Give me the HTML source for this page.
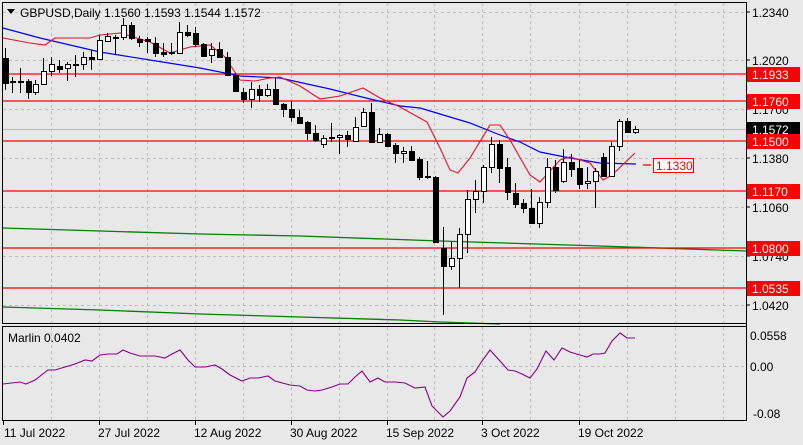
<!DOCTYPE html>
<html><head><meta charset="utf-8"><style>
html,body{margin:0;padding:0;background:#e8e8e8;}
body{width:803px;height:445px;overflow:hidden;position:relative;font-family:"Liberation Sans",sans-serif;}
svg{position:absolute;left:0;top:0;}
svg text{font-family:"Liberation Sans",sans-serif;font-size:12px;}
</style></head><body>
<svg id="s" width="803" height="445" xmlns="http://www.w3.org/2000/svg">
<rect x="0" y="0" width="803" height="445" fill="#e8e8e8"/>
<g id="grid" stroke="#bdbdbd" stroke-dasharray="3,3" stroke-width="1"></g>
<line x1="3" y1="129.5" x2="746" y2="129.5" stroke="#b8b8b8"/>
<!-- green lines -->
<polyline points="3,228 100,231 200,234 300,236 440,241 600,246 746,251" fill="none" stroke="#008000" stroke-width="1.3"/>
<polyline points="3,307 100,310 200,314 300,317 400,320 440,322 500,324" fill="none" stroke="#008000" stroke-width="1.3"/>
<!-- red horizontal levels -->
<g stroke="#ff0000" stroke-width="1.3">
<line x1="3" y1="74" x2="746" y2="74"/>
<line x1="3" y1="101" x2="746" y2="101"/>
<line x1="3" y1="141" x2="746" y2="141"/>
<line x1="3" y1="191" x2="746" y2="191"/>
<line x1="3" y1="248" x2="746" y2="248"/>
<line x1="3" y1="288" x2="746" y2="288"/>
<line x1="643" y1="165" x2="651" y2="165"/>
</g>
<!-- blue MA -->
<polyline points="3,28 40,38 100,52 150,60 200,68 240,76 280,78 330,89 370,99 400,106 420,108 450,117 470,123 500,135 520,142 540,152 570,158 600,163 636,164" fill="none" stroke="#0000ff" stroke-width="1.2"/>
<!-- red MA -->
<polyline points="3,38 30,43 45,45 55,38 90,38 100,35 120,33 130,36 150,42 170,53 190,47 210,45 225,57 240,80 255,81 270,78 280,77 300,86 320,99 340,96 363,88 380,98 400,107 427,122 440,148 450,170 458,173 470,158 490,125 500,125 510,140 530,175 540,182 560,160 570,157 590,163 603,180 612,175 635,153" fill="none" stroke="#e8102a" stroke-width="1.1"/>
<g id="candles"></g>
<!-- frames -->
<rect x="2.5" y="2.5" width="744" height="321" fill="none" stroke="#000"/>
<rect x="2.5" y="326.5" width="744" height="94" fill="none" stroke="#000"/>
<line x1="746.5" y1="2" x2="746.5" y2="421" stroke="#000"/>
<!-- indicator -->
<polyline points="3,384 20,382 26,384 35,380 48,370 55,370 65,367 75,364 85,360 92,361 100,355 108,354 117,354 123,350 130,353 140,356 150,356 155,356 165,358 172,354 180,350 188,360 195,367 205,367 215,365 222,369 230,375 242,381 250,378 258,378 268,376 275,381 290,385 300,386 307,390 315,391 322,390 332,387 340,384 348,384 355,377 362,371 370,382 378,378 385,382 395,382 405,383 415,388 425,387 432,406 443,417 450,411 460,397 467,378 475,372 482,361 490,350 500,361 508,370 515,371 522,374 530,378 537,369 546,351 554,360 562,348 570,352 580,355 587,357 593,354 600,354 605,353 612,341 620,333 627,338 635,338" fill="none" stroke="#8b008b" stroke-width="1.1"/>
<text x="8" y="342" font-size="12">Marlin 0.0402</text>
<!-- title -->
<path d="M7,9 L15,9 L11,14 Z" fill="#000"/>
<text x="20" y="17">GBPUSD,Daily  1.1560 1.1593 1.1544 1.1572</text>
<!-- right axis -->
<g font-size="12" fill="#000">
<text x="752" y="17">1.2340</text>
<text x="752" y="65">1.2020</text>
<text x="752" y="114">1.1700</text>
<text x="752" y="163">1.1380</text>
<text x="752" y="212">1.1060</text>
<text x="752" y="261">1.0740</text>
<text x="752" y="310">1.0420</text>
<text x="750" y="340">0.0558</text>
<text x="750" y="371">0.00</text>
<text x="753" y="418">-0.08</text>
</g>
<g stroke="#000"><line x1="746" y1="12" x2="750" y2="12"/><line x1="746" y1="60" x2="750" y2="60"/><line x1="746" y1="109" x2="750" y2="109"/><line x1="746" y1="158" x2="750" y2="158"/><line x1="746" y1="207" x2="750" y2="207"/><line x1="746" y1="256" x2="750" y2="256"/><line x1="746" y1="305" x2="750" y2="305"/></g>
<g font-size="12">
<rect x="747" y="67" width="53" height="15" fill="#ff0000"/><text x="752" y="79" fill="#fff">1.1933</text>
<rect x="747" y="94" width="53" height="15" fill="#ff0000"/><text x="752" y="106" fill="#fff">1.1760</text>
<rect x="747" y="122" width="53" height="14" fill="#000"/><text x="752" y="134" fill="#fff">1.1572</text>
<rect x="747" y="134" width="53" height="15" fill="#ff0000"/><text x="752" y="146" fill="#fff">1.1500</text>
<rect x="747" y="184" width="53" height="15" fill="#ff0000"/><text x="752" y="196" fill="#fff">1.1170</text>
<rect x="747" y="241" width="53" height="15" fill="#ff0000"/><text x="752" y="253" fill="#fff">1.0800</text>
<rect x="747" y="281" width="53" height="15" fill="#ff0000"/><text x="752" y="293" fill="#fff">1.0535</text>
<rect x="653.5" y="158.5" width="40" height="14" fill="#fff" stroke="#ff0000"/><text x="656" y="170" fill="#ff0000">1.1330</text>
</g>
<!-- dates -->
<g font-size="12" fill="#000">
<text x="4" y="437">11 Jul 2022</text>
<text x="98" y="437">27 Jul 2022</text>
<text x="194" y="437">12 Aug 2022</text>
<text x="290" y="437">30 Aug 2022</text>
<text x="386" y="437">15 Sep 2022</text>
<text x="481" y="437">3 Oct 2022</text>
<text x="578" y="437">19 Oct 2022</text>
</g>
</svg>
<script>
var NS="http://www.w3.org/2000/svg";
function el(p,t,a){var e=document.createElementNS(NS,t);for(var k in a)e.setAttribute(k,a[k]);p.appendChild(e);return e;}
var g=document.getElementById('grid');
[51,99,147,195,243,291,339,387,434,482,530,579,627,675,723].forEach(function(x){el(g,'line',{x1:x+.5,y1:3,x2:x+.5,y2:323});el(g,'line',{x1:x+.5,y1:327,x2:x+.5,y2:420});});
[12,60,109,158,207,256,305].forEach(function(y){el(g,'line',{x1:3,y1:y+.5,x2:746,y2:y+.5});});
el(g,'line',{x1:3,y1:366.5,x2:746,y2:366.5});
var tk=document.getElementById('s');
[3,99,195,291,387,482,579].forEach(function(x){el(tk,'line',{x1:x+.5,y1:421,x2:x+.5,y2:425,stroke:'#000'});});
// [x, hi, bodyTop, bodyBot, lo, white]
var C=[[5,48,58,83,90,0],[12,77,81,82,93,0],[20,68,81,82,93,0],[28,79,81,92,99,0],[35,80,84,92,95,1],[43,58,71,84,85,1],[51,57,64,71,76,1],[59,60,66,69,73,0],[67,62,64,68,81,1],[75,55,64,65,77,0],[83,52,57,64,70,1],[91,50,57,59,70,0],[99,35,40,59,60,1],[107,33,36,41,41,1],[115,35,37,38,55,0],[123,18,25,37,40,1],[131,22,25,38,40,0],[139,36,39,42,47,0],[147,37,39,41,53,0],[155,37,43,53,57,0],[163,43,52,54,57,0],[171,43,52,53,55,0],[179,22,32,53,53,1],[187,25,32,35,37,0],[195,27,33,44,47,0],[203,43,44,56,57,0],[211,43,49,55,63,1],[219,42,49,57,58,0],[227,52,57,75,76,0],[235,73,75,91,92,0],[243,88,92,99,103,0],[251,82,89,99,108,1],[259,85,89,95,102,0],[267,84,89,95,97,1],[275,78,89,104,104,0],[283,103,104,109,117,0],[291,101,109,117,122,0],[299,110,117,123,124,0],[307,121,122,133,140,0],[315,125,133,140,142,0],[323,135,138,144,148,1],[331,123,137,138,142,0],[339,134,135,137,154,1],[347,131,135,139,147,0],[355,117,127,141,142,1],[363,108,112,126,127,1],[371,103,112,142,142,0],[379,128,134,142,143,1],[387,133,134,146,147,0],[395,143,145,153,163,0],[403,147,151,153,163,1],[411,146,151,160,161,0],[419,157,159,177,180,0],[427,161,176,177,179,0],[435,176,177,242,242,0],[443,227,248,266,315,0],[451,242,258,266,270,1],[459,228,234,258,288,1],[467,190,199,234,253,1],[475,180,191,199,213,1],[483,165,167,191,203,1],[491,137,144,167,173,1],[499,140,144,168,183,0],[507,158,167,192,200,0],[515,183,193,204,208,0],[523,199,203,208,213,0],[531,189,208,223,224,0],[539,197,202,223,228,1],[547,158,167,202,208,1],[555,160,167,190,193,0],[563,149,162,181,183,1],[571,154,162,169,177,0],[579,160,168,184,189,0],[587,167,181,183,189,1],[595,168,171,181,208,1],[603,153,157,176,177,0],[611,142,146,176,177,1],[619,119,121,146,151,1],[627,118,121,132,132,0],[635,126,129,132,134,1]];
var cg=document.getElementById('candles');
C.forEach(function(c){var x=c[0];
el(cg,'line',{x1:x+.5,y1:c[1],x2:x+.5,y2:c[4],stroke:'#000'});
var h=Math.max(c[3]-c[2],1);
if(c[5])el(cg,'rect',{x:x-2+.5,y:c[2]+.5,width:5,height:h,fill:'#fff',stroke:'#000'});
else el(cg,'rect',{x:x-2,y:c[2],width:6,height:h+1,fill:'#000'});
});
</script>
</body></html>
